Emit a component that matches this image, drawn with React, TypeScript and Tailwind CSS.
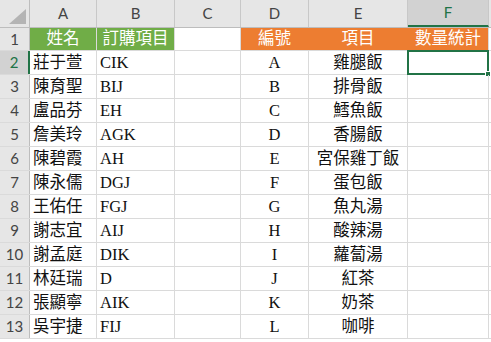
import React from "react";

const cols = [
  { key: "A", w: "w-[67px]" },
  { key: "B", w: "w-[78px]" },
  { key: "C", w: "w-[66px]" },
  { key: "D", w: "w-[68px]" },
  { key: "E", w: "w-[99px]" },
  { key: "F", w: "w-[81px]" },
  { key: "", w: "w-[60px]" },
];

const people = [
  ["莊于萱", "CIK"],
  ["陳育聖", "BIJ"],
  ["盧品芬", "EH"],
  ["詹美玲", "AGK"],
  ["陳碧霞", "AH"],
  ["陳永儒", "DGJ"],
  ["王佑任", "FGJ"],
  ["謝志宜", "AIJ"],
  ["謝孟庭", "DIK"],
  ["林廷瑞", "D"],
  ["張顯寧", "AIK"],
  ["吳宇捷", "FIJ"],
];

const menu = [
  ["A", "雞腿飯"],
  ["B", "排骨飯"],
  ["C", "鱈魚飯"],
  ["D", "香腸飯"],
  ["E", "宮保雞丁飯"],
  ["F", "蛋包飯"],
  ["G", "魚丸湯"],
  ["H", "酸辣湯"],
  ["I", "蘿蔔湯"],
  ["J", "紅茶"],
  ["K", "奶茶"],
  ["L", "咖啡"],
];

// Excel-style cell text sits on the bottom of the cell
const cellFont =
  "font-['Liberation_Serif','Noto_Sans_CJK_TC',serif] text-[16.5px] leading-[18px] items-end pb-[2px] text-[#111]";
const headFont = "font-['Lato','Liberation_Sans',sans-serif] text-[15px] text-[#444]";

function Cell({
  w,
  children,
  className = "",
}: {
  w: string;
  children?: React.ReactNode;
  className?: string;
}) {
  return (
    <div
      className={`${w} shrink-0 h-full border-r border-[#dadada] flex overflow-visible whitespace-nowrap ${className}`}
    >
      {children}
    </div>
  );
}

export default function App() {
  const rows = Array.from({ length: 13 }, (_, i) => i + 1);

  return (
    <div className="w-[491px] h-[342px] overflow-hidden bg-white">
      {/* Column headers */}
      <div className="flex h-[28px] bg-[#e6e6e6] border-b border-[#bdbdbd]">
        <div className="relative w-[30px] shrink-0 h-full border-r border-[#bdbdbd]">
          <div className="absolute right-[3px] bottom-[3px] w-0 h-0 border-l-[17px] border-l-transparent border-b-[15px] border-b-[#b4b4b4]" />
        </div>
        {cols.map((c, i) => (
          <div
            key={i}
            className={`${c.w} shrink-0 h-full border-r border-[#c8c8c8] flex items-center justify-center ${headFont} ${
              c.key === "F" ? "bg-[#d2d2d2] border-b-2 border-b-[#217346] text-[#217346]" : ""
            }`}
          >
            {c.key}
          </div>
        ))}
      </div>

      {rows.map((r) => {
        const p = people[r - 2];
        const m = menu[r - 2];
        const header = r === 1;
        return (
          <div
            key={r}
            className={`flex ${r === 1 ? "h-[23px]" : "h-[24px]"} border-b border-[#dadada]`}
          >
            <div
              className={`w-[30px] shrink-0 h-full flex items-center justify-center ${headFont} ${
                r === 2
                  ? "bg-[#d2d2d2] border-r-2 border-r-[#217346] text-[#217346]"
                  : "bg-[#e6e6e6] border-r border-r-[#bdbdbd]"
              }`}
            >
              {r}
            </div>
            {header ? (
              <>
                <Cell w="w-[67px]" className={`bg-[#70ad47] justify-center ${cellFont} !text-white`}>
                  姓名
                </Cell>
                <Cell w="w-[78px]" className={`bg-[#70ad47] justify-center ${cellFont} !text-white`}>
                  訂購項目
                </Cell>
                <Cell w="w-[66px]" />
                <Cell w="w-[68px]" className={`bg-[#ed7d31] border-r-[#ed7d31] justify-center ${cellFont} !text-white`}>
                  編號
                </Cell>
                <Cell w="w-[99px]" className={`bg-[#ed7d31] border-r-[#ed7d31] justify-center ${cellFont} !text-white`}>
                  項目
                </Cell>
                <Cell w="w-[81px]" className={`bg-[#ed7d31] justify-center ${cellFont} !text-white`}>
                  數量統計
                </Cell>
                <Cell w="w-[60px]" />
              </>
            ) : (
              <>
                <Cell w="w-[67px]" className={`pl-[3px] ${cellFont}`}>
                  {p[0]}
                </Cell>
                <Cell w="w-[78px]" className={`pl-[3px] ${cellFont}`}>
                  {p[1]}
                </Cell>
                <Cell w="w-[66px]" />
                <Cell w="w-[68px]" className={`justify-center ${cellFont}`}>
                  {m[0]}
                </Cell>
                <Cell w="w-[99px]" className={`justify-center ${cellFont}`}>
                  {m[1]}
                </Cell>
                <Cell w="w-[81px]" className="relative">
                  {r === 2 && (
                    <>
                      <div className="absolute -left-px -top-px w-[82px] h-[25px] border-2 border-[#217346]" />
                      <div className="absolute -right-[3px] -bottom-[3px] w-[6px] h-[6px] bg-[#217346] border border-white" />
                    </>
                  )}
                </Cell>
                <Cell w="w-[60px]" />
              </>
            )}
          </div>
        );
      })}
    </div>
  );
}
